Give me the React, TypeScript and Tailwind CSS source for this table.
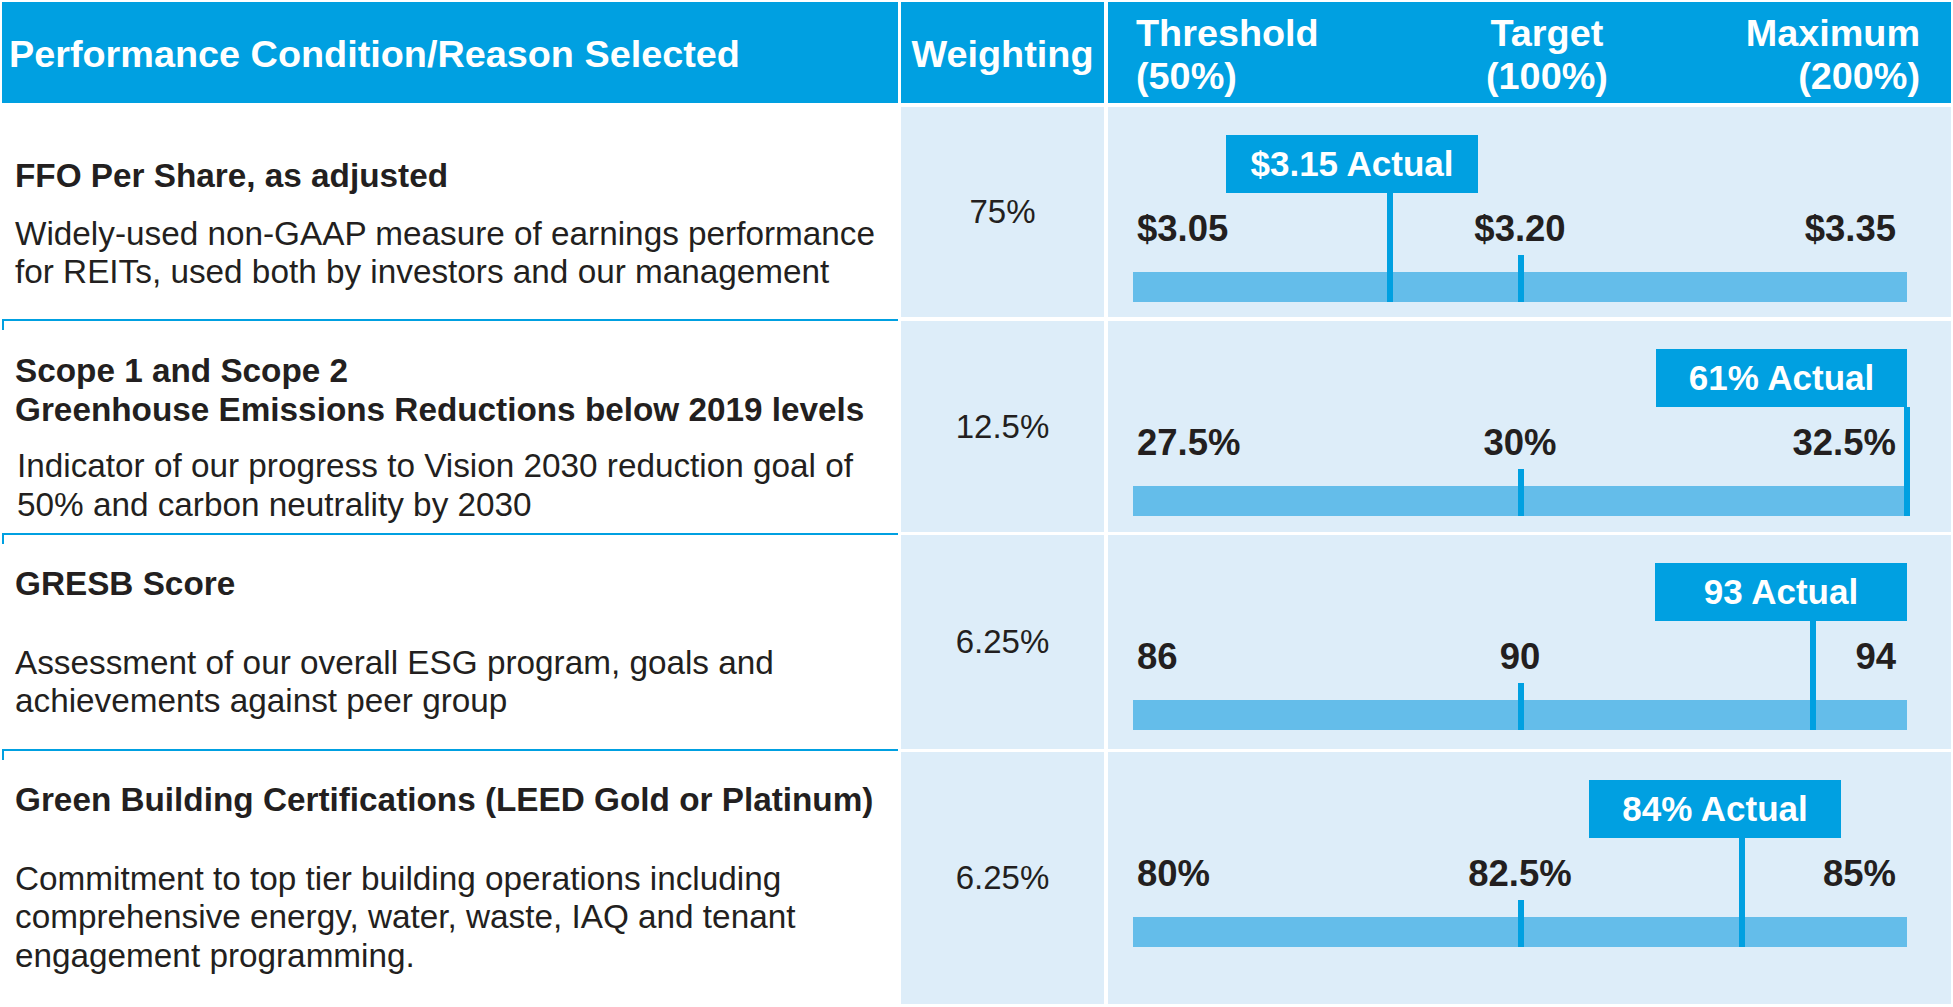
import React from "react";

type RowData = {
  h: string;
  colTop: string;
  cell: string;
  pt: string;
  descMt: string;
  descPl: string;
  title: string[];
  desc: string[];
  weight: string;
  labels: [string, string, string];
  actual: string;
  boxMl: string;
  boxW: string;
  lineLeft: string;
  first: boolean;
};

const rows: RowData[] = [
  {
    h: "h-[216px]",
    colTop: "",
    cell: "mt-[4px] mb-[2px]",
    pt: "pt-[54px]",
    descMt: "mt-[19px]",
    descPl: "",
    title: ["FFO Per Share, as adjusted"],
    desc: [
      "Widely-used non-GAAP measure of earnings performance",
      "for REITs, used both by investors and our management",
    ],
    weight: "75%",
    labels: ["$3.05", "$3.20", "$3.35"],
    actual: "$3.15 Actual",
    boxMl: "ml-[93px]",
    boxW: "w-[252px]",
    lineLeft: "left-[254px]",
    first: true,
  },
  {
    h: "h-[214px]",
    colTop: "border-t-2",
    cell: "mt-[2px] mb-[1px]",
    pt: "pt-[31px]",
    descMt: "mt-[18px]",
    descPl: "pl-[2px]",
    title: ["Scope 1 and Scope 2", "Greenhouse Emissions Reductions below 2019 levels"],
    desc: [
      "Indicator of our progress to Vision 2030 reduction goal of",
      "50% and carbon neutrality by 2030",
    ],
    weight: "12.5%",
    labels: ["27.5%", "30%", "32.5%"],
    actual: "61% Actual",
    boxMl: "ml-[523px]",
    boxW: "w-[253px]",
    lineLeft: "left-[771px]",
    first: false,
  },
  {
    h: "h-[216px]",
    colTop: "border-t-2",
    cell: "mt-[2px] mb-[0px]",
    pt: "pt-[30px]",
    descMt: "mt-[40px]",
    descPl: "",
    title: ["GRESB Score"],
    desc: [
      "Assessment of our overall ESG program, goals and",
      "achievements against peer group",
    ],
    weight: "6.25%",
    labels: ["86", "90", "94"],
    actual: "93 Actual",
    boxMl: "ml-[522px]",
    boxW: "w-[252px]",
    lineLeft: "left-[677px]",
    first: false,
  },
  {
    h: "h-[256px]",
    colTop: "border-t-2",
    cell: "mt-[3px] mb-[1px]",
    pt: "pt-[30px]",
    descMt: "mt-[40px]",
    descPl: "",
    title: ["Green Building Certifications (LEED Gold or Platinum)"],
    desc: [
      "Commitment to top tier building operations including",
      "comprehensive energy, water, waste, IAQ and tenant",
      "engagement programming.",
    ],
    weight: "6.25%",
    labels: ["80%", "82.5%", "85%"],
    actual: "84% Actual",
    boxMl: "ml-[456px]",
    boxW: "w-[252px]",
    lineLeft: "left-[606px]",
    first: false,
  },
];

function Chart({ r }: { r: RowData }) {
  return (
    <div className="relative w-[774px]">
      <div className="h-[58px] flex">
        <div
          className={`${r.boxMl} ${r.boxW} h-[58px] bg-[#00a0e1] text-white font-bold text-[35px] leading-[42px] flex items-center justify-center whitespace-nowrap`}
        >
          {r.actual}
        </div>
      </div>
      <div className="mt-[15px] grid grid-cols-[1fr_auto_1fr] font-bold text-[36.5px] leading-[42px] whitespace-nowrap">
        <div className="pl-[4px]">{r.labels[0]}</div>
        <div>{r.labels[1]}</div>
        <div className="text-right pr-[11px]">{r.labels[2]}</div>
      </div>
      <div className="relative mt-[22px] h-[30px] bg-[#64bdea]">
        <div className="absolute left-[385px] top-[-17px] bottom-0 w-[6px] bg-[#00a0e1]" />
      </div>
      <div className={`absolute top-[58px] ${r.lineLeft} w-[6px] h-[109px] bg-[#00a0e1]`} />
    </div>
  );
}

function Row({ r }: { r: RowData }) {
  return (
    <div className={`flex ${r.h}`}>
      <div className={`relative w-[896px] bg-white ${r.colTop} border-[#00a0e1] pl-[13px] ${r.pt}`}>
        {!r.first && <div className="absolute left-0 top-0 w-[2px] h-[9px] bg-[#00a0e1]" />}
        <div className="font-bold text-[33.3px] leading-[38.5px] whitespace-nowrap">
          {r.title.map((t) => (
            <div key={t}>{t}</div>
          ))}
        </div>
        <div className={`${r.descMt} ${r.descPl} text-[33.3px] leading-[38.5px] whitespace-nowrap`}>
          {r.desc.map((t) => (
            <div key={t}>{t}</div>
          ))}
        </div>
      </div>
      <div
        className={`w-[203px] ml-[3px] ${r.cell} bg-[#ddedf9] flex items-center justify-center text-[33px] leading-[38px]`}
      >
        {r.weight}
      </div>
      <div className={`w-[843px] ml-[4px] ${r.cell} bg-[#ddedf9] pl-[25px] pt-[28px]`}>
        <Chart r={r} />
      </div>
    </div>
  );
}

export default function App() {
  return (
    <div className="w-[1953px] h-[1007px] bg-white pt-[2px] pl-[2px] overflow-hidden font-['Liberation_Sans',Arial,sans-serif] text-[#231f20]">
      <div className="flex h-[101px] text-white font-bold text-[37.8px] leading-[43px]">
        <div className="w-[896px] bg-[#00a0e1] flex items-center pl-[7px] pt-[3px] whitespace-nowrap">
          Performance Condition/Reason Selected
        </div>
        <div className="w-[203px] ml-[3px] bg-[#00a0e1] flex items-center justify-center pt-[3px]">Weighting</div>
        <div className="w-[843px] ml-[4px] bg-[#00a0e1] flex items-center pl-[28px] pr-[31px] pt-[5px] whitespace-nowrap">
          <div className="w-[350px]">
            <div>Threshold</div>
            <div>(50%)</div>
          </div>
          <div className="flex flex-col items-center">
            <div>Target</div>
            <div>(100%)</div>
          </div>
          <div className="ml-auto text-right">
            <div>Maximum</div>
            <div>(200%)</div>
          </div>
        </div>
      </div>
      {rows.map((r, i) => (
        <Row key={i} r={r} />
      ))}
    </div>
  );
}
